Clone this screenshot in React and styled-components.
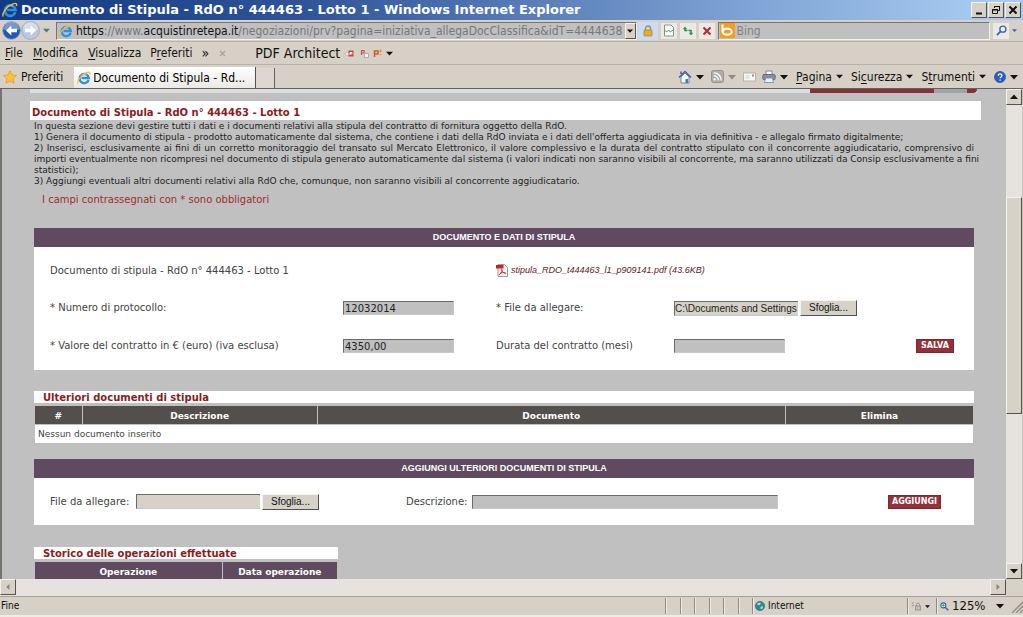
import React from "react";
import styled, { createGlobalStyle, css } from "styled-components";

const ui = '"DejaVu Sans Condensed", "DejaVu Sans", sans-serif';
const web = '"DejaVu Sans", sans-serif';
const arial = '"Liberation Sans", Arial, sans-serif';

const Global = createGlobalStyle`
  * { box-sizing: border-box; }
  html, body { margin: 0; padding: 0; }
  body { background: #d6d0c6; color: #111; font-family: ${ui}; overflow: hidden; }
  button, input { font: inherit; margin: 0; border-radius: 0; outline: none; min-width: 0; }
  svg { display: block; flex: none; }
`;

const raised = css`
  background: #d6d2c8;
  border: 1px solid;
  border-color: #f4f2ee #55524e #55524e #f4f2ee;
`;

const Browser = styled.div`
  display: flex;
  flex-direction: column;
  height: 100vh;
`;

/* title bar */
const TitleBar = styled.header`
  display: flex;
  align-items: center;
  gap: 3px;
  height: 20px;
  flex: none;
  padding: 0 2px;
  color: #fff;
  background: linear-gradient(90deg, #123a80 0%, #2f5499 30%, #6c90c6 62%, #a6caf0 96%);
`;
const WindowTitle = styled.h1`
  flex: 1;
  margin: 0;
  font: bold 13px/18px ${web};
  white-space: nowrap;
`;
const WindowButtons = styled.div`
  display: flex;
  gap: 1px;
`;
const WindowButton = styled.button`
  ${raised}
  width: 16px;
  height: 16px;
  padding: 0;
  display: grid;
  place-items: center;
`;

/* address bar */
const AddressBar = styled.div`
  display: flex;
  align-items: center;
  height: 22px;
  flex: none;
  padding: 0 3px 0 2px;
  border-bottom: 1px solid #b8b3aa;
`;
const NavButton = styled.button`
  border: 0;
  padding: 0;
  background: none;
  display: grid;
  place-items: center;
  flex: none;
  width: ${(p) => p.$w || 19}px;
  height: 20px;
`;
const Field = styled.div`
  display: flex;
  align-items: center;
  height: 18px;
  min-width: 0;
  flex: ${(p) => p.$grow} 1 0;
  margin-left: ${(p) => p.$ml}px;
  padding-left: ${(p) => p.$pl}px;
  background: #c0c0c0;
  border: 1px solid;
  border-color: #77736d #f4f2ee #f4f2ee #77736d;
  overflow: hidden;
`;
const Url = styled.div`
  flex: 1;
  min-width: 0;
  margin-left: 3px;
  overflow: hidden;
  white-space: nowrap;
  font-size: 12px;
  line-height: 16px;
  color: #777;
  b { font-weight: normal; color: #111; }
`;
const DropButton = styled.button`
  ${raised}
  width: 11px;
  height: 16px;
  padding: 0;
  display: grid;
  place-items: center;
  flex: none;
`;
const ToolButton = styled.button`
  display: grid;
  place-items: center;
  flex: none;
  width: ${(p) => p.$w || 16}px;
  height: ${(p) => (p.$lit ? 18 : 16)}px;
  margin-left: ${(p) => (p.$lit ? 1 : 3)}px;
  padding: 0;
  border: 0;
  background: ${(p) => (p.$lit ? "#c9dcf4" : "#ebe9e6")};
`;
const SearchInput = styled.input`
  flex: 1;
  border: 0;
  padding: 0 2px;
  background: transparent;
  font-size: 12px;
  &::placeholder { color: #808080; opacity: 1; }
`;

/* menu and tab bars */
const MenuBar = styled.nav`
  display: flex;
  align-items: center;
  height: 23px;
  flex: none;
  padding-left: 5px;
  font-size: 12px;
  line-height: 16px;
  white-space: nowrap;
  border-bottom: 1px solid #b8b3aa;
`;
const MenuItem = styled.button`
  border: 0;
  padding: 0;
  margin-right: ${(p) => p.$gap ?? 10}px;
  background: none;
  color: #111;
  font-size: ${(p) => (p.$large ? 14 : 12)}px;
  display: flex;
  align-items: center;
  gap: 4px;
  white-space: nowrap;
  u { text-underline-offset: 2px; }
`;
const TabBar = styled.nav`
  display: flex;
  align-items: center;
  height: 23px;
  flex: none;
  padding: 0 5px 0 3px;
  font-size: 12px;
`;
const Tab = styled.button`
  display: flex;
  align-items: center;
  gap: 2px;
  align-self: flex-end;
  height: 21px;
  width: 182px;
  margin-left: 1px;
  padding: 0 3px;
  border: 0;
  border-right: 1px solid #55524e;
  background: linear-gradient(#ffffff, #ebe9e5);
  white-space: nowrap;
`;
const NewTab = styled.button`
  align-self: flex-end;
  width: 19px;
  height: 20px;
  padding: 0;
  border: 0;
  border-right: 1px solid #66625d;
  background: #dcd8d1;
`;
const Commands = styled.div`
  display: flex;
  align-items: center;
  margin-left: auto;
`;

/* viewport and scroll bars */
const Viewport = styled.div`
  flex: 1;
  min-height: 0;
  display: flex;
  border-top: 1px solid #66625d;
`;
const Page = styled.main`
  flex: 1;
  min-width: 0;
  overflow: hidden;
  padding: 0 25px 0 28px;
  border-left: 2px solid #77736f;
  background: #c0c0c0;
  font-family: ${web};
  color: #444;
`;
const trackFill = css`
  background: #e6e3de;
`;
const VerticalBar = styled.div`
  ${trackFill}
  display: flex;
  flex-direction: column;
  width: 17px;
  flex: none;
  border-right: 1px solid #c9c5bd;
`;
const ScrollButton = styled.button`
  ${raised}
  width: 16px;
  height: 16px;
  flex: none;
  padding: 0;
  display: grid;
  place-items: center;
`;
const Thumb = styled.div`
  ${raised}
  flex: 216;
`;
const Space = styled.div`
  flex: ${(p) => p.$n};
`;
const HorizontalBar = styled.div`
  ${trackFill}
  display: flex;
  height: 17px;
  flex: none;
`;
const Corner = styled.div`
  width: 17px;
  background: #d6d2c8;
`;

/* page content */
const Banner = styled.div`
  display: flex;
  height: 4px;
  margin-right: 4px;
  background: #dedede;
`;
const BannerPart = styled.div`
  width: ${(p) => p.$w}px;
  margin-left: ${(p) => (p.$first ? "auto" : 0)};
  background: ${(p) => p.$c};
  border-bottom-right-radius: ${(p) => (p.$round ? 4 : 0)}px;
`;
const PageTitle = styled.h2`
  margin: 8px 0 0;
  padding: 4px 2px 0;
  height: 19px;
  background: #fff;
  color: #8c1c1c;
  font: bold 10px/16px ${web};
`;
const Inner = styled.div`
  margin: 1px 7px 0 4px;
`;
const Intro = styled.p`
  margin: 0;
  font-size: 9px;
  line-height: 11px;
  color: #222;
`;
const JustifiedLine = styled.span`
  display: block;
  white-space: ${(p) => (p.$full ? "nowrap" : "normal")};
  text-align: justify;
  text-align-last: justify;
`;
const Notice = styled.p`
  margin: 7px 0 22px;
  padding-left: 8px;
  font-size: 10px;
  line-height: 12px;
  color: #a32c2c;
`;
const Panel = styled.form`
  background: #fff;
  margin-bottom: ${(p) => p.$mb}px;
`;
const PanelTitle = styled.h3`
  margin: 0;
  height: 19px;
  background: #5f4a60;
  color: #fff;
  text-align: center;
  font: bold 9px/18px ${arial};
`;
const DataGrid = styled.div`
  display: grid;
  grid-template-columns: 293fr 153fr 178fr 242fr 38px;
  grid-auto-rows: 38px;
  align-items: center;
  padding: 4px 20px 5px 16px;
  font-size: 10px;
`;
const AddRow = styled.div`
  display: flex;
  align-items: center;
  height: 47px;
  padding: 0 33px 0 16px;
  font-size: 10px;
`;
const Label = styled.label`
  font-size: 10px;
  line-height: 12px;
  white-space: nowrap;
  min-width: ${(p) => p.$w || 0}px;
  margin-left: ${(p) => p.$ml || 0}px;
`;
const TextInput = styled.input`
  width: ${(p) => p.$w}px;
  height: ${(p) => (p.$file ? 15 : 14)}px;
  padding: 0 1px;
  border: 1px solid;
  border-color: #6d6a68 #c8c8c8 #c8c8c8 #6d6a68;
  background: #c0c0c0;
  color: #222;
  font-family: ${web};
  font-size: 10px;
  line-height: 12px;
  margin-left: ${(p) => p.$ml || 0}px;
  ${(p) =>
    p.$file &&
    css`
      padding: 0;
      border-right-width: 0;
      background: #d6d2c8;
      font-family: ${arial};
    `}
`;
const FileField = styled.div`
  display: flex;
  gap: 2px;
  align-items: center;
`;
const BrowseButton = styled.button`
  ${raised}
  width: 57px;
  height: 16px;
  padding: 0;
  color: #111;
  font: 10px/12px ${arial};
`;
const ActionButton = styled.button`
  height: 14px;
  width: ${(p) => p.$w}px;
  margin-left: auto;
  padding: 0;
  border: 1px solid #7c2a30;
  background: #94303a;
  color: #fff;
  font: bold 8px/12px ${web};
`;
const PdfLink = styled.a`
  grid-column: 3 / 6;
  display: flex;
  align-items: center;
  gap: 3px;
  color: #5c1c24;
  text-decoration: none;
  font: italic 9px/12px ${arial};
`;
const Wide = styled.span`
  grid-column: 1 / 3;
`;
const Section = styled.section`
  width: ${(p) => p.$w || "100%"};
  margin-bottom: 15px;
`;
const SectionTitle = styled.h3`
  margin: 0 0 2px;
  height: 12px;
  padding-left: 9px;
  background: #fff;
  color: #8c1c1c;
  font: bold 10px/13px ${web};
`;
const Table = styled.table`
  width: 100%;
  table-layout: fixed;
  border-collapse: separate;
  border-spacing: 1px;
  font-size: 9px;
  th {
    height: 18px;
    padding: 1px 0 0;
    color: #fff;
    background: ${(p) => p.$head};
    line-height: 12px;
  }
  td {
    height: 18px;
    padding: 0 3px;
    background: #fff;
    line-height: 12px;
  }
`;
const Col = styled.col`
  width: ${(p) => p.$w};
`;

/* status bar */
const StatusBar = styled.footer`
  display: flex;
  align-items: center;
  height: 21px;
  flex: none;
  border-top: 1px solid #a5a19a;
  border-bottom: 2px solid #efece8;
  font-size: 10px;
  line-height: 12px;
`;
const Pane = styled.div`
  display: flex;
  align-items: center;
  gap: 3px;
  height: 16px;
  width: ${(p) => (p.$w ? p.$w + "px" : "auto")};
  flex: ${(p) => (p.$w ? "none" : 1)};
  padding-left: ${(p) => p.$pl || 1}px;
  border-left: ${(p) => (p.$w ? "1px solid #8f8b85" : 0)};
  box-shadow: ${(p) => (p.$w ? "inset 1px 0 #eeebe6" : "none")};
  font-size: ${(p) => (p.$large ? 13 : 10)}px;
`;

const Arrow = ({ w = 7, color = "#111", dir = "down" }) => {
  const turn = { down: 0, up: 180, left: 90, right: 270 }[dir];
  return (
    <svg width={w} height={w} viewBox="0 0 8 8" aria-hidden="true">
      <path d="M0 2h8L4 6.400z" fill={color} transform={`rotate(${turn} 4 4)`} />
    </svg>
  );
};

const Explorer = ({ size = 14 }) => (
  <svg width={size} height={size} viewBox="0 0 16 16" aria-hidden="true">
    <path d="M13.300 10.200A5.300 5.300 0 1 1 13.500 8H5.200" fill="none" stroke="#2f8fe0" strokeWidth="2.700" />
    <path d="M4.500 5.500A4.600 4.600 0 0 1 11 4.300" fill="none" stroke="#9ad4fa" strokeWidth="1" />
    <path d="M1.300 14.500C-.6 11.500 5 4 11 1.800c3-1.100 4.200-.2 3.400 2.200" fill="none" stroke="#f2bf2c" strokeWidth="1.400" />
  </svg>
);

const Round = ({ flip, active }) => (
  <svg width="19" height="19" viewBox="0 0 20 20" aria-hidden="true">
    <circle cx="10" cy="10" r="9.300" fill={active ? "#2458b0" : "#b9cbe0"} stroke={active ? "#8da3c8" : "#98a9bd"} />
    <path d="M2 9a8 8 0 0 1 16 0c-4 2-12 2-16 0z" fill="#fff" opacity=".38" />
    <path
      d="M4.200 10l5.600-5.200v3.400h6v3.600h-6v3.400z"
      fill="#fff"
      transform={flip ? "rotate(180 10 10)" : undefined}
    />
  </svg>
);

const Lock = () => (
  <svg width="10" height="12" viewBox="0 0 10 12" aria-hidden="true">
    <path d="M2.500 6V3.500a2.500 2.500 0 0 1 5 0V6" fill="none" stroke="#a8925a" strokeWidth="1.400" />
    <rect x="1" y="5" width="8" height="6" rx="1" fill="#e4b030" stroke="#a87c1a" strokeWidth=".7" />
  </svg>
);

const TornPage = () => (
  <svg width="12" height="13" viewBox="0 0 12 13" aria-hidden="true">
    <path d="M1.500 1h6.500l2.500 2.500V12h-9z" fill="#fafff9" stroke="#7f9a83" />
    <path d="M1.500 6l2 2 2-2 2 2 3-2.500" fill="none" stroke="#4c9b63" />
  </svg>
);

const Refresh = () => (
  <svg width="12" height="12" viewBox="0 0 12 12" aria-hidden="true">
    <path d="M5.500 5.500H3V4" fill="none" stroke="#279444" strokeWidth="1.500" />
    <path d="M3 1.500L.8 4.300h4.400z" fill="#279444" />
    <path d="M6.500 5.500H9V8" fill="none" stroke="#279444" strokeWidth="1.500" />
    <path d="M9 10.500L6.800 7.700h4.400z" fill="#279444" />
  </svg>
);

const Cross = ({ color = "#c4202e", size = 10, width = 2 }) => (
  <svg width={size} height={size} viewBox="0 0 10 10" aria-hidden="true">
    <path d="M1.500 1.500l7 7M8.500 1.500l-7 7" stroke={color} strokeWidth={width} />
  </svg>
);

const BingMark = () => (
  <svg width="15" height="15" viewBox="0 0 15 15" aria-hidden="true">
    <rect width="15" height="15" fill="#f79b1e" />
    <path d="M2.500 1.500v7" stroke="#fff" strokeWidth="2.200" />
    <ellipse cx="7.200" cy="8.700" rx="4.600" ry="3" fill="none" stroke="#fff" strokeWidth="2.200" />
  </svg>
);

const Magnifier = ({ size = 11, plus }) => (
  <svg width={size} height={size} viewBox="0 0 12 12" aria-hidden="true">
    <circle cx={plus ? 4.500 : 7.500} cy="4.500" r="3.300" fill="#e7f1ff" stroke="#3565bd" strokeWidth="1.500" />
    <path d={plus ? "M7 7l4 4" : "M5 7l-4 4"} stroke="#3565bd" strokeWidth="2" />
    {plus && <path d="M4.500 2.800v3.400M2.800 4.500h3.400" stroke="#3565bd" />}
  </svg>
);

const Star = () => (
  <svg width="14" height="14" viewBox="0 0 14 14" aria-hidden="true">
    <path d="M7 .8l2 4.100 4.500.6-3.300 3.200.8 4.500-4-2.200-4 2.200.8-4.500L.5 5.500 5 4.900z" fill="#fdc03a" stroke="#e39a2c" strokeWidth=".8" />
  </svg>
);

const PdfTool = ({ kind }) => (
  <svg width="9" height="9" viewBox="0 0 9 9" aria-hidden="true">
    {kind === 0 && (
      <>
        <path d="M.5 3.500h4v3h-4z" fill="#f7efec" stroke="#dcb9b2" />
        <path d="M3.500 1.500h5v6h-5z" fill="#d04040" />
        <path d="M5 6V3.500h2v1.300H5" fill="none" stroke="#fff" />
      </>
    )}
    {kind === 1 && (
      <>
        <path d="M1.500 6V1.500H4V4H1.500" fill="none" stroke="#cb5050" strokeWidth="1.200" />
        <path d="M4.500 4.500h4v4h-4z" fill="#f7f3f1" stroke="#b7a9a6" />
      </>
    )}
    {kind === 2 && (
      <>
        <path d="M1.500 8V2H5v3H1.500" fill="none" stroke="#d05a2c" strokeWidth="1.500" />
        <path d="M6 2h3M7.500.5v3M6.500 5.500h2" stroke="#dc9a2c" />
      </>
    )}
  </svg>
);

const House = () => (
  <svg width="14" height="14" viewBox="0 0 14 14" aria-hidden="true">
    <path d="M3 7v6h8V7L7 3z" fill="#f2f5fa" stroke="#7488a8" />
    <path d="M1 7.500l6-6 6 6M3 1.500V4" fill="none" stroke="#3c63a5" strokeWidth="1.500" />
    <path d="M7.500 9H10v4H7.500z" fill="#4778bd" />
  </svg>
);

const Feed = () => (
  <svg width="13" height="13" viewBox="0 0 13 13" aria-hidden="true">
    <rect x=".5" y=".5" width="12" height="12" rx="2" fill="#b0aeaa" stroke="#96938f" />
    <circle cx="3.700" cy="9.400" r="1.100" fill="#fff" />
    <path d="M2.800 5.700a4.500 4.500 0 0 1 4.500 4.700M2.800 2.900a7.200 7.200 0 0 1 7.300 7.500" fill="none" stroke="#fff" strokeWidth="1.300" />
  </svg>
);

const Mail = () => (
  <svg width="13" height="10" viewBox="0 0 13 10" aria-hidden="true">
    <rect x=".5" y="1" width="12" height="8" fill="#f8f7f6" stroke="#b6b2ac" />
    <path d="M2.500 4h4M2.500 6h4" stroke="#d3cfca" />
    <rect x="9" y="2.500" width="2" height="2" fill="#cf7777" />
  </svg>
);

const Printer = () => (
  <svg width="14" height="13" viewBox="0 0 14 13" aria-hidden="true">
    <path d="M4 1h6v4H4z" fill="#fff" stroke="#7a8695" />
    <rect x=".8" y="4.500" width="12.400" height="5" rx="1" fill="#8792a0" stroke="#57616e" strokeWidth=".8" />
    <path d="M3.500 8h7l1 4.500h-9z" fill="#e7f0f8" stroke="#6788aa" strokeWidth=".8" />
  </svg>
);

const Help = () => (
  <svg width="12" height="12" viewBox="0 0 12 12" aria-hidden="true">
    <circle cx="6" cy="6" r="5.500" fill="#2b5fc1" stroke="#1f438c" strokeWidth=".7" />
    <path d="M4.200 4.700c0-2.400 3.700-2.300 3.700-.2C7.900 6 6.100 5.800 6.100 7.300M6.100 8.400v1.300" fill="none" stroke="#fff" strokeWidth="1.200" />
  </svg>
);

const PdfFile = () => (
  <svg width="12" height="13" viewBox="0 0 12 13" aria-hidden="true">
    <path d="M2 .5h6.500l3 3v9H2z" fill="#f5f5f5" stroke="#9b9b9b" />
    <rect x="0" y="1" width="7.500" height="3.500" fill="#cf2027" />
    <path d="M3 11c3-2 3.500-5 3-5.500-.8-.6-.7 3 4 4M4 9.500c1.500-1 4-1.200 5.500-.7" fill="none" stroke="#cf2027" strokeWidth=".9" />
  </svg>
);

const Globe = () => (
  <svg width="10" height="10" viewBox="0 0 10 10" aria-hidden="true">
    <circle cx="5" cy="5" r="4.600" fill="#2c8a94" stroke="#25656d" strokeWidth=".6" />
    <path d="M2 3.200c1-1.700 3-1.700 3.800-1.200L5 4H3zM5.500 6l2.500-1-.5 2.500-1.800.8z" fill="#b5e6c5" />
  </svg>
);

const Shield = () => (
  <svg width="11" height="10" viewBox="0 0 11 10" aria-hidden="true">
    <path d="M1 3l2-2M1 5l2-1" stroke="#9a9690" />
    <path d="M5.500 5V3.500a1.500 1.500 0 0 1 3 0V5" fill="none" stroke="#9a9690" />
    <rect x="4.500" y="5" width="5" height="4" fill="#c2beb7" stroke="#9a9690" />
  </svg>
);

const Grip = () => (
  <svg width="12" height="14" viewBox="0 0 12 14" aria-hidden="true">
    <path d="M1 14L12 3M5 14l7-7M9 14l3-3" stroke="#8f8b85" strokeWidth="1.300" />
  </svg>
);

export default function App() {
  const stay = (e) => e.preventDefault();
  return (
    <>
      <Global />
      <Browser>
        <TitleBar>
          <Explorer size={16} />
          <WindowTitle>Documento di Stipula - RdO n° 444463 - Lotto 1 - Windows Internet Explorer</WindowTitle>
          <WindowButtons>
            <WindowButton aria-label="Riduci">
              <svg width="9" height="9"><path d="M1 7.500h6" stroke="#111" strokeWidth="2" /></svg>
            </WindowButton>
            <WindowButton aria-label="Ripristina">
              <svg width="10" height="10">
                <path d="M3.500 3V1.500h5v4H7M3 1.500h6M1.500 4.500h5v4h-5zM1 5h6" fill="none" stroke="#111" />
              </svg>
            </WindowButton>
            <WindowButton aria-label="Chiudi"><Cross color="#111" /></WindowButton>
          </WindowButtons>
        </TitleBar>

        <AddressBar>
          <NavButton aria-label="Indietro"><Round active /></NavButton>
          <NavButton aria-label="Avanti"><Round flip /></NavButton>
          <NavButton $w={13} aria-label="Cronologia"><Arrow color="#4d7396" /></NavButton>
          <Field $grow={582} $ml={3} $pl={2}>
            <Explorer />
            <Url role="textbox" aria-label="Indirizzo">
              <b>https</b>://www.<b>acquistinretepa.it</b>/negoziazioni/prv?pagina=iniziativa_allegaDocClassifica&amp;idT=4444638
            </Url>
            <DropButton aria-label="Indirizzi"><Arrow w={6} /></DropButton>
          </Field>
          <ToolButton $lit $w={20} aria-label="Protezione"><Lock /></ToolButton>
          <ToolButton aria-label="Compatibilità"><TornPage /></ToolButton>
          <ToolButton aria-label="Aggiorna"><Refresh /></ToolButton>
          <ToolButton aria-label="Interrompi"><Cross /></ToolButton>
          <Field $grow={272} $ml={3} $pl={1}>
            <BingMark />
            <SearchInput aria-label="Cerca" placeholder="Bing" />
          </Field>
          <ToolButton aria-label="Avvia ricerca"><Magnifier /></ToolButton>
          <NavButton $w={11} aria-label="Opzioni di ricerca"><Arrow w={5} color="#3565bd" /></NavButton>
        </AddressBar>

        <MenuBar>
          <MenuItem><span><u>F</u>ile</span></MenuItem>
          <MenuItem><span><u>M</u>odifica</span></MenuItem>
          <MenuItem $gap={9}><span><u>V</u>isualizza</span></MenuItem>
          <MenuItem $gap={9}><span>P<u>r</u>eferiti</span></MenuItem>
          <MenuItem $large aria-label="Altro">»</MenuItem>
          <MenuItem $gap={29} aria-label="Chiudi barra"><Cross color="#aaa6a0" size={7} /></MenuItem>
          <MenuItem $large $gap={5}>PDF Architect</MenuItem>
          <MenuItem $gap={6} aria-label="Crea PDF"><PdfTool kind={0} /></MenuItem>
          <MenuItem $gap={4} aria-label="Copia in PDF"><PdfTool kind={1} /></MenuItem>
          <MenuItem aria-label="Opzioni PDF"><PdfTool kind={2} /><Arrow /></MenuItem>
        </MenuBar>

        <TabBar>
          <MenuItem><Star />Preferiti</MenuItem>
          <Tab><Explorer />Documento di Stipula - Rd...</Tab>
          <NewTab aria-label="Nuova scheda" />
          <Commands>
            <MenuItem $gap={7} aria-label="Pagina iniziale"><House /><Arrow w={8} /></MenuItem>
            <MenuItem $gap={7} aria-label="Feed"><Feed /><Arrow w={8} color="#8f8b85" /></MenuItem>
            <MenuItem $gap={6} aria-label="Posta"><Mail /></MenuItem>
            <MenuItem $gap={8} aria-label="Stampa"><Printer /><Arrow w={8} /></MenuItem>
            <MenuItem $gap={8}><span><u>P</u>agina</span><Arrow /></MenuItem>
            <MenuItem $gap={8}><span>Si<u>c</u>urezza</span><Arrow /></MenuItem>
            <MenuItem $gap={8}><span>S<u>t</u>rumenti</span><Arrow /></MenuItem>
            <MenuItem $gap={0} aria-label="Guida"><Help /><Arrow w={8} /></MenuItem>
          </Commands>
        </TabBar>

        <Viewport>
          <Page>
            <Banner>
              <BannerPart $first $w={124} $c="#84323a" />
              <BannerPart $w={33} $c="#a3a3a3" />
              <BannerPart $w={10} $c="#84323a" $round />
            </Banner>
            <PageTitle>Documento di Stipula - RdO n° 444463 - Lotto 1</PageTitle>
            <Inner>
              <Intro>In questa sezione devi gestire tutti i dati e i documenti relativi alla stipula del contratto di fornitura oggetto della RdO.</Intro>
              <Intro>1) Genera il documento di stipula - prodotto automaticamente dal sistema, che contiene i dati della RdO inviata e i dati dell'offerta aggiudicata in via definitiva - e allegalo firmato digitalmente;</Intro>
              <Intro>
                <JustifiedLine>2) Inserisci, esclusivamente ai fini di un corretto monitoraggio del transato sul Mercato Elettronico, il valore complessivo e la durata del contratto stipulato con il concorrente aggiudicatario, comprensivo di</JustifiedLine>
                <JustifiedLine $full>importi eventualmente non ricompresi nel documento di stipula generato automaticamente dal sistema (i valori indicati non saranno visibili al concorrente, ma saranno utilizzati da Consip esclusivamente a fini</JustifiedLine>
                statistici);
              </Intro>
              <Intro>3) Aggiungi eventuali altri documenti relativi alla RdO che, comunque, non saranno visibili al concorrente aggiudicatario.</Intro>
              <Notice>I campi contrassegnati con * sono obbligatori</Notice>

              <Panel $mb={21} onSubmit={stay}>
                <PanelTitle>DOCUMENTO E DATI DI STIPULA</PanelTitle>
                <DataGrid>
                  <Wide>Documento di stipula - RdO n° 444463 - Lotto 1</Wide>
                  <PdfLink href="#pdf"><PdfFile />stipula_RDO_t444463_l1_p909141.pdf (43.6KB)</PdfLink>
                  <Label htmlFor="protocollo">* Numero di protocollo:</Label>
                  <TextInput id="protocollo" $w={111} defaultValue="12032014" />
                  <Label htmlFor="file1">* File da allegare:</Label>
                  <FileField>
                    <TextInput id="file1" $file $w={124} defaultValue="C:\Documents and Settings" />
                    <BrowseButton type="button">Sfoglia...</BrowseButton>
                  </FileField>
                  <span />
                  <Label htmlFor="valore">* Valore del contratto in € (euro) (iva esclusa)</Label>
                  <TextInput id="valore" $w={111} defaultValue="4350,00" />
                  <Label htmlFor="durata">Durata del contratto (mesi)</Label>
                  <TextInput id="durata" $w={111} />
                  <ActionButton $w={38}>SALVA</ActionButton>
                </DataGrid>
              </Panel>

              <Section>
                <SectionTitle>Ulteriori documenti di stipula</SectionTitle>
                <Table $head="#534f4d">
                  <colgroup>
                    <Col $w="5%" />
                    <Col $w="25%" />
                    <Col $w="50%" />
                    <Col $w="20%" />
                  </colgroup>
                  <thead>
                    <tr><th>#</th><th>Descrizione</th><th>Documento</th><th>Elimina</th></tr>
                  </thead>
                  <tbody>
                    <tr><td colSpan={4}>Nessun documento inserito</td></tr>
                  </tbody>
                </Table>
              </Section>

              <Panel $mb={22} onSubmit={stay}>
                <PanelTitle>AGGIUNGI ULTERIORI DOCUMENTI DI STIPULA</PanelTitle>
                <AddRow>
                  <Label htmlFor="file2" $w={82}>File da allegare:</Label>
                  <TextInput id="file2" $file $w={124} $ml={4} />
                  <Space $n="0 0 2px" />
                  <BrowseButton type="button">Sfoglia...</BrowseButton>
                  <Label htmlFor="descrizione" $w={62} $ml={87}>Descrizione:</Label>
                  <TextInput id="descrizione" $w={306} $ml={4} />
                  <ActionButton $w={53}>AGGIUNGI</ActionButton>
                </AddRow>
              </Panel>

              <Section $w="304px">
                <SectionTitle>Storico delle operazioni effettuate</SectionTitle>
                <Table $head="#5f4a60">
                  <colgroup>
                    <Col $w="62%" />
                    <Col $w="38%" />
                  </colgroup>
                  <thead>
                    <tr><th>Operazione</th><th>Data operazione</th></tr>
                  </thead>
                </Table>
              </Section>
            </Inner>
          </Page>
          <VerticalBar>
            <ScrollButton aria-label="Su"><Arrow w={8} dir="up" /></ScrollButton>
            <Space $n={92} />
            <Thumb />
            <Space $n={150} />
            <ScrollButton aria-label="Giù"><Arrow w={8} /></ScrollButton>
          </VerticalBar>
        </Viewport>
        <HorizontalBar>
          <ScrollButton aria-label="Sinistra"><Arrow w={6} dir="left" color="#8a8680" /></ScrollButton>
          <Space $n={1} />
          <ScrollButton aria-label="Destra"><Arrow w={6} dir="right" color="#8a8680" /></ScrollButton>
          <Corner />
        </HorizontalBar>

        <StatusBar>
          <Pane>Fine</Pane>
          {[15, 14, 15, 14, 15, 14].map((w, i) => <Pane key={i} $w={w} />)}
          <Pane $w={155} $pl={2}><Globe />Internet</Pane>
          <Pane $w={29} $pl={3}><Shield /><Arrow w={5} /></Pane>
          <Pane $w={75} $pl={3} $large>
            <Magnifier size={9} plus />125%<Space $n={1} /><Arrow w={8} /><Space $n={1} />
          </Pane>
          <Grip />
        </StatusBar>
      </Browser>
    </>
  );
}
